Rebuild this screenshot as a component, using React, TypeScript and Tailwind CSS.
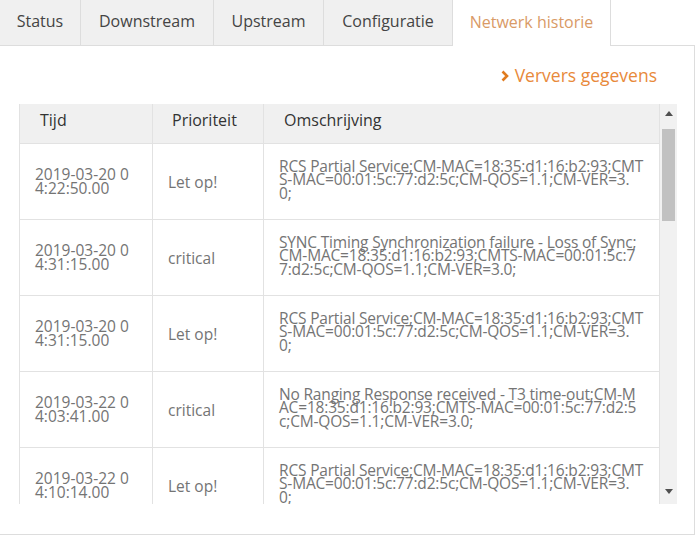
import React from 'react';

type Row = {
  time: string[];
  prio: string;
  desc: string[];
};

const tabs = [
  { label: 'Status', w: 'w-[81px]' },
  { label: 'Downstream', w: 'w-[133px]' },
  { label: 'Upstream', w: 'w-[110px]' },
  { label: 'Configuratie', w: 'w-[129px]' },
];

const rows: Row[] = [
  {
    time: ['2019-03-20 0', '4:22:50.00'],
    prio: 'Let op!',
    desc: ['RCS Partial Service;CM-MAC=18:35:d1:16:b2:93;CMT', 'S-MAC=00:01:5c:77:d2:5c;CM-QOS=1.1;CM-VER=3.', '0;'],
  },
  {
    time: ['2019-03-20 0', '4:31:15.00'],
    prio: 'critical',
    desc: ['SYNC Timing Synchronization failure - Loss of Sync;', 'CM-MAC=18:35:d1:16:b2:93;CMTS-MAC=00:01:5c:7', '7:d2:5c;CM-QOS=1.1;CM-VER=3.0;'],
  },
  {
    time: ['2019-03-20 0', '4:31:15.00'],
    prio: 'Let op!',
    desc: ['RCS Partial Service;CM-MAC=18:35:d1:16:b2:93;CMT', 'S-MAC=00:01:5c:77:d2:5c;CM-QOS=1.1;CM-VER=3.', '0;'],
  },
  {
    time: ['2019-03-22 0', '4:03:41.00'],
    prio: 'critical',
    desc: ['No Ranging Response received - T3 time-out;CM-M', 'AC=18:35:d1:16:b2:93;CMTS-MAC=00:01:5c:77:d2:5', 'c;CM-QOS=1.1;CM-VER=3.0;'],
  },
  {
    time: ['2019-03-22 0', '4:10:14.00'],
    prio: 'Let op!',
    desc: ['RCS Partial Service;CM-MAC=18:35:d1:16:b2:93;CMT', 'S-MAC=00:01:5c:77:d2:5c;CM-QOS=1.1;CM-VER=3.', '0;'],
  },
];

function Lines({ lines }: { lines: string[] }) {
  return (
    <div>
      {lines.map((l, i) => (
        <div key={i} className="whitespace-nowrap">
          {l}
        </div>
      ))}
    </div>
  );
}

export default function App() {
  return (
    <div
      className="w-[700px] h-[536px] bg-white overflow-hidden"
      style={{ fontFamily: '"Open Sans", "Liberation Sans", sans-serif' }}
    >
      <div className="w-[695px]">
        {/* Tabs */}
        <div className="flex h-[46px]">
          {tabs.map((t) => (
            <div
              key={t.label}
              className={`${t.w} h-[46px] flex items-center justify-center bg-[#f0f0f0] border-r border-b border-[#dddddd] text-[16px] text-[#444] pb-[3px]`}
            >
              {t.label}
            </div>
          ))}
          <div className="w-[158px] h-[46px] flex items-center justify-center bg-white border-r border-[#dddddd] text-[16px] text-[#d99a66] pb-[3px]">
            Netwerk historie
          </div>
          <div className="flex-1 h-[46px] border-b border-[#dddddd]" />
        </div>

        {/* Panel */}
        <div className="h-[489px] border-r border-b border-[#dddddd]">
          <div className="flex justify-end pr-[37px] pt-[4px] h-[58px]">
            <button className="flex items-center gap-[6px] h-[50px] text-[17.5px] text-[#e8893a]">
              <svg width="8" height="12" viewBox="0 0 8 12" className="mt-[1px]">
                <path d="M1.5 1.5 L6 6 L1.5 10.5" fill="none" stroke="#e07b1f" strokeWidth="2.6" />
              </svg>
              Ververs gegevens
            </button>
          </div>

          {/* Table with scrollbar */}
          <div className="ml-[19px] w-[658px] h-[400px] flex">
            <div className="w-[641px] h-full overflow-hidden border-l border-[#e2e2e2]">
              <div className="flex h-[40px] bg-[#f0f0f0] border-b border-[#e2e2e2] text-[16px] text-[#333]">
                <div className="w-[133px] flex items-center pl-[20px] pb-[7px] border-r border-[#e2e2e2]">Tijd</div>
                <div className="w-[111px] flex items-center pl-[19px] pb-[7px] border-r border-[#e2e2e2]">Prioriteit</div>
                <div className="flex-1 flex items-center pl-[20px] pb-[7px] border-r border-[#e2e2e2]">Omschrijving</div>
              </div>
              {rows.map((r, i) => (
                <div
                  key={i}
                  className="flex h-[76px] border-b border-[#e2e2e2] text-[15.5px] leading-[13.5px] text-[#747474]"
                >
                  <div className="w-[133px] flex items-center pl-[15px] border-r border-[#e2e2e2]">
                    <Lines lines={r.time} />
                  </div>
                  <div className="w-[111px] flex items-center pl-[15px] border-r border-[#e2e2e2] leading-[16px]">
                    {r.prio}
                  </div>
                  <div className="flex-1 flex items-center pl-[15px] pb-[3px] border-r border-[#e2e2e2] tracking-[-0.18px]">
                    <Lines lines={r.desc} />
                  </div>
                </div>
              ))}
            </div>

            {/* Scrollbar */}
            <div className="w-[17px] h-full bg-[#f1f1f1] flex flex-col items-center">
              <div className="h-[17px] w-full flex items-center justify-center pt-[2px]">
                <svg width="8" height="5" viewBox="0 0 8 5">
                  <path d="M0 5 L4 0 L8 5 Z" fill="#505050" />
                </svg>
              </div>
              <div className="mt-[8px] w-[13px] h-[92px] bg-[#c1c1c1]" />
              <div className="flex-1" />
              <div className="h-[17px] w-full flex items-center justify-center mb-[4px]">
                <svg width="8" height="5" viewBox="0 0 8 5">
                  <path d="M0 0 L8 0 L4 5 Z" fill="#505050" />
                </svg>
              </div>
            </div>
          </div>
        </div>
      </div>
    </div>
  );
}
